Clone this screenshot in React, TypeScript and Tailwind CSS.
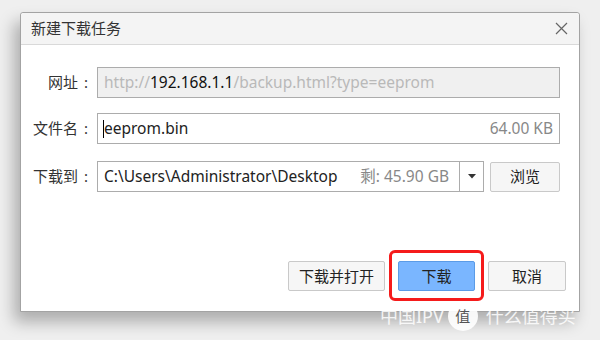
const App = () => {
  return (
    <div
      className="relative w-[600px] h-[340px] bg-[#efefef] overflow-hidden pt-[12px] pl-[20px]"
      style={{ fontFamily: '"Noto Sans", "Noto Sans CJK SC", sans-serif' }}
    >
      <div className="w-[560px] h-[300px] bg-white border border-[#a3a3a3] rounded-t-[3px] shadow-[-6px_10px_16px_rgba(0,0,0,0.28)] flex flex-col">
        {/* title bar */}
        <div className="h-[32px] bg-[#f4f4f4] border-b border-[#d9d9d9] flex items-center justify-between pl-[10px] pr-[11px] rounded-t-[3px]">
          <span className="text-[15px] text-[#333]">新建下载任务</span>
          <svg width="13" height="13" viewBox="0 0 13 13" stroke="#666" strokeWidth="1.2">
            <path d="M1 1L12 12M12 1L1 12" />
          </svg>
        </div>

        <div className="flex-1 flex flex-col pt-[22px] pr-[19px] pb-[20px]">
          <div className="grid grid-cols-[76px_1fr] gap-y-[15px] items-center text-[15.5px]">
            <span className="text-right pr-[9px] text-[#333] text-[15px]">
              网址<span className="ml-[6px]">:</span>
            </span>
            <div className="h-[31px] bg-[#f0f0f0] border border-[#acacac] flex items-center px-[6px] text-[#b9b9b9] whitespace-nowrap">
              http://<span className="text-[#111]">192.168.1.1</span>/backup.html?type=eeprom
            </div>

            <span className="text-right pr-[9px] text-[#333] text-[15px]">
              文件名<span className="ml-[6px]">:</span>
            </span>
            <div className="h-[31px] border border-[#acacac] flex items-center px-[5px] text-[#222]">
              <span className="w-px h-[18px] bg-black" />
              <span>eeprom.bin</span>
              <span className="ml-auto text-[#888] pr-[1px]">64.00 KB</span>
            </div>

            <span className="text-right pr-[9px] text-[#333] text-[15px] mt-[2px]">
              下载到<span className="ml-[6px]">:</span>
            </span>
            <div className="flex items-center gap-[6px] mt-[2px]">
              <div className="flex-1 h-[31px] border border-[#acacac] flex items-center">
                <span className="pl-[6px] text-[#222] whitespace-nowrap">C:\Users\Administrator\Desktop</span>
                <span className="ml-auto pr-[10px] text-[#888] whitespace-nowrap">剩: 45.90 GB</span>
                <div className="w-[24px] h-full border-l border-[#acacac] flex items-center justify-center">
                  <svg width="8" height="5" viewBox="0 0 8 5">
                    <path d="M0 0H8L4 4.5Z" fill="#333" />
                  </svg>
                </div>
              </div>
              <button className="w-[70px] h-[30px] bg-[#f6f6f6] border border-[#c9c9c9] rounded-[2px] text-[15px] text-[#222]">
                浏览
              </button>
            </div>
          </div>

          <div className="mt-auto flex justify-end gap-[13px] mr-[-6px] text-[15px] text-[#222]">
            <button className="w-[97px] h-[30px] bg-[#f6f6f6] border border-[#c9c9c9] rounded-[2px]">
              下载并打开
            </button>
            <div className="relative">
              <button className="w-[77px] h-[30px] bg-[#7ab6ff] border border-[#5b9be6] rounded-[2px]">
                下载
              </button>
              <div className="absolute left-[-9px] right-[-9px] top-[-11px] bottom-[-10px] border-[3px] border-[#f51b1b] rounded-[6px]" />
            </div>
            <button className="w-[78px] h-[30px] bg-[#f6f6f6] border border-[#c9c9c9] rounded-[2px]">
              取消
            </button>
          </div>
        </div>
      </div>

      {/* watermark */}
      <div className="absolute left-[380px] top-[301px] flex items-center gap-[4px] text-white/85 text-[18px] whitespace-nowrap">
        <span>中国IPV</span>
        <span className="w-[30px] h-[30px] rounded-full bg-white/90 text-[#555] text-[15px] flex items-center justify-center">
          值
        </span>
        <span className="ml-[4px]">什么值得买</span>
      </div>
    </div>
  );
};

export default App;
